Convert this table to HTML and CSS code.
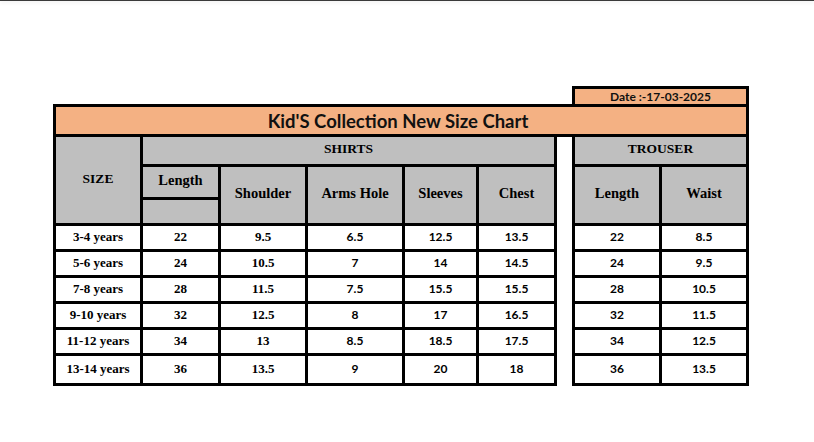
FILE: index.html
```html
<!DOCTYPE html>
<html>
<head>
<meta charset="utf-8">
<link rel="stylesheet" href="styles.css">
</head>
<body>
<div class="topbar"></div>
<div class="page">
  <div class="date-row">
    <div class="date">Date :-17-03-2025</div>
  </div>
  <div class="chart">
    <div class="c title">Kid'S Collection New Size Chart</div>
    <div class="c hd size">SIZE</div>
    <div class="c hd group shirts">SHIRTS</div>
    <div class="spacer"></div>
    <div class="c hd group trouser">TROUSER</div>
    <div class="c hd sub len">Length</div>
    <div class="c hd len-blank"></div>
    <div class="c hd sub tall c3">Shoulder</div>
    <div class="c hd sub tall c4">Arms Hole</div>
    <div class="c hd sub tall c5">Sleeves</div>
    <div class="c hd sub tall c6">Chest</div>
    <div class="c hd sub tall c8">Length</div>
    <div class="c hd sub tall c9">Waist</div>

    <div class="c d s">3-4 years</div><div class="c d s">22</div><div class="c d s">9.5</div><div class="c d n">6.5</div><div class="c d n">12.5</div><div class="c d n">13.5</div><div class="c d n">22</div><div class="c d n">8.5</div>
    <div class="c d s">5-6 years</div><div class="c d s">24</div><div class="c d s">10.5</div><div class="c d n">7</div><div class="c d n">14</div><div class="c d n">14.5</div><div class="c d n">24</div><div class="c d n">9.5</div>
    <div class="c d s">7-8 years</div><div class="c d s">28</div><div class="c d s">11.5</div><div class="c d n">7.5</div><div class="c d n">15.5</div><div class="c d n">15.5</div><div class="c d n">28</div><div class="c d n">10.5</div>
    <div class="c d s">9-10 years</div><div class="c d s">32</div><div class="c d s">12.5</div><div class="c d n">8</div><div class="c d n">17</div><div class="c d n">16.5</div><div class="c d n">32</div><div class="c d n">11.5</div>
    <div class="c d s">11-12 years</div><div class="c d s">34</div><div class="c d s">13</div><div class="c d n">8.5</div><div class="c d n">18.5</div><div class="c d n">17.5</div><div class="c d n">34</div><div class="c d n">12.5</div>
    <div class="c d s">13-14 years</div><div class="c d s">36</div><div class="c d s">13.5</div><div class="c d n">9</div><div class="c d n">20</div><div class="c d n">18</div><div class="c d n">36</div><div class="c d n">13.5</div>
  </div>
</div>
</body>
</html>
```
FILE: styles.css
```css
html, body {
  margin: 0;
  padding: 0;
  background: #fff;
}
body {
  width: 814px;
  height: 442px;
  overflow: hidden;
  position: relative;
}
.topbar {
  height: 1px;
  background: #3a3a3a;
  box-shadow: 0 1px 4px rgba(0, 0, 0, 0.18);
}
.page {
  padding: 85px 0 0 53px;
  width: 696px;
}
.date-row {
  display: flex;
  justify-content: flex-end;
}
.date {
  box-sizing: border-box;
  width: 177px;
  height: 18px;
  border: 3px solid #000;
  border-bottom: none;
  background: #f4b183;
  font-family: Lato, "Liberation Sans", sans-serif;
  font-weight: 700;
  font-size: 12px;
  line-height: 15px;
  text-align: center;
  color: #111;
}
.chart {
  display: grid;
  grid-template-columns: 84px 75px 84px 94px 71px 75px 15px 84px 84px;
  grid-template-rows: 27px 27px 30px 23px 23px 23px 23px 23px 23px 27px;
  gap: 3px;
  padding: 3px;
  background: #000;
  width: 690px;
}
.c {
  display: flex;
  align-items: center;
  justify-content: center;
  background: #fff;
  color: #000;
}
.title {
  grid-column: 1 / -1;
  grid-row: 1;
  background: #f4b183;
  font-family: Lato, "Liberation Sans", sans-serif;
  font-weight: 700;
  font-size: 18.5px;
  color: #111;
  padding-top: 1px;
  padding-right: 6px;
}
.hd {
  background: #bfbfbf;
  font-family: "Liberation Serif", serif;
  font-weight: 700;
}
.size {
  grid-column: 1;
  grid-row: 2 / 5;
  font-size: 13.5px;
  padding-bottom: 3px;
}
.group {
  font-size: 13.5px;
  padding-bottom: 4px;
}
.shirts {
  grid-column: 2 / 7;
  grid-row: 2;
}
.trouser {
  grid-column: 8 / 10;
  grid-row: 2;
}
.spacer {
  grid-column: 7;
  grid-row: 2 / -1;
  background: #fff;
  margin-bottom: -3px;
}
.sub {
  font-size: 14.5px;
}
.len {
  grid-column: 2;
  grid-row: 3;
  padding-bottom: 3px;
}
.len-blank {
  grid-column: 2;
  grid-row: 4;
}
.tall {
  grid-row: 3 / 5;
  padding-bottom: 4px;
}
.c3 { grid-column: 3; }
.c4 { grid-column: 4; }
.c5 { grid-column: 5; }
.c6 { grid-column: 6; }
.c8 { grid-column: 8; }
.c9 { grid-column: 9; }
.d {
  font-weight: 700;
  padding-bottom: 2px;
}
.s {
  font-family: "Liberation Serif", serif;
  font-size: 13px;
}
.n {
  font-family: Lato, "Liberation Sans", sans-serif;
  font-size: 12px;
}
```
